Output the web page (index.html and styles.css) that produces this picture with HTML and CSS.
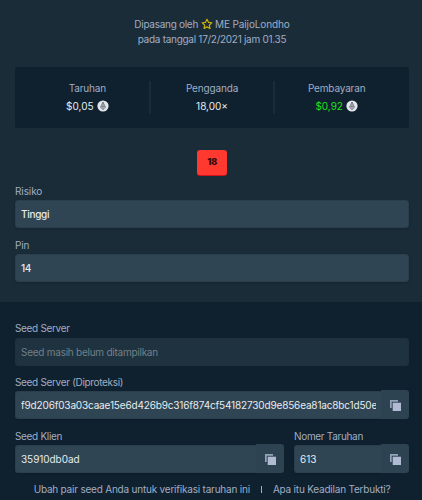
FILE: index.html
```html
<!DOCTYPE html>
<html lang="id">
<head>
<meta charset="utf-8">
<title>Taruhan</title>
<link rel="stylesheet" href="styles.css">
</head>
<body>
<svg class="defs" aria-hidden="true">
  <symbol id="coin" viewBox="0 0 12 12"><circle cx="6" cy="6" r="5.6" fill="#e3e6ea"/><path d="M6 2 3.5 7.3 6 9.6 8.5 7.3Z M6 2v7.4 M3.6 7.2 6 6.2l2.4 1" fill="#c5c9ce" stroke="#6b727b" stroke-width=".8"/></symbol>
  <symbol id="copy" viewBox="0 0 11 11"><path d="M0 0h8v1.7H1.7V8H0Z" fill="#94a3ba"/><path d="M2.7 2.7H11V11H2.7Z" fill="#b1bad3"/></symbol>
</svg>
<main class="bet">
  <header class="meta">
    <div class="line"><span>Dipasang oleh</span><svg class="star" viewBox="0 0 12 12"><path d="m6 1.2 1.45 3.1 3.35.45-2.45 2.35.6 3.4L6 8.9l-2.95 1.6.6-3.4L1.2 4.75l3.35-.45Z" fill="none" stroke="#c9b008" stroke-width="1.25" stroke-linejoin="round"/></svg><span class="name">ME PaijoLondho</span></div>
    <div class="line">pada tanggal 17/2/2021 jam 01.35</div>
  </header>
  <section class="stats">
    <div class="stat"><span class="k">Taruhan</span><span class="v">$0,05<svg class="coin"><use href="#coin"/></svg></span></div>
    <div class="stat"><span class="k">Pengganda</span><span class="v">18,00×</span></div>
    <div class="stat"><span class="k">Pembayaran</span><span class="v win">$0,92<svg class="coin"><use href="#coin"/></svg></span></div>
  </section>
  <div class="tile">18</div>
  <div class="field"><label>Risiko</label><div class="input strong">Tinggi</div></div>
  <div class="field"><label>Pin</label><div class="input strong">14</div></div>
</main>
<section class="fair">
  <div class="field"><label>Seed Server</label><div class="input disabled">Seed masih belum ditampilkan</div></div>
  <div class="field"><label>Seed Server (Diproteksi)</label><div class="group"><div class="input"><span class="hash">f9d206f03a03caae15e6d426b9c316f874cf54182730d9e856ea81ac8bc1d50e</span></div><button class="copy"><svg><use href="#copy"/></svg></button></div></div>
  <div class="row">
    <div class="field client"><label>Seed Klien</label><div class="group"><div class="input seed">35910db0ad</div><button class="copy"><svg><use href="#copy"/></svg></button></div></div>
    <div class="field nonce"><label>Nomer Taruhan</label><div class="group"><div class="input">613</div><button class="copy"><svg><use href="#copy"/></svg></button></div></div>
  </div>
  <footer><span>Ubah pair seed Anda untuk verifikasi taruhan ini</span><i></i><span>Apa itu Keadilan Terbukti?</span></footer>
</section>
</body>
</html>
```
FILE: styles.css
```css
* { box-sizing: border-box; }
body {
  margin: 0;
  width: 422px;
  height: 500px;
  overflow: hidden;
  background: #0f212e;
  color: #a1adc4;
  font: 10px/16px Inter, "Liberation Sans", sans-serif;
  white-space: nowrap;
}
.defs { position: absolute; width: 0; height: 0; }
.bet { height: 302px; padding: 16px 13px 0 15px; background: #1a2c38; }
.meta { height: 51px; letter-spacing: -.28px; }
.line { display: flex; justify-content: center; align-items: center; height: 15.5px; }
.star { width: 12px; height: 12px; margin: 0 2px 0 3px; }
.name { letter-spacing: -.12px; }
.stats { display: flex; height: 61px; padding: 14px 11px; background: #0f212e; border-radius: 2px; }
.stat {
  flex: 1 0 0;
  display: flex;
  flex-direction: column;
  align-items: center;
  gap: 2px;
}
.stat > span { margin-top: -1px; margin-bottom: 1px; }
.stat + .stat { border-left: 2px solid #1a2c38; }
.k { letter-spacing: -.15px; }
.v { display: flex; align-items: center; color: #e8ebee; }
.win { color: #1fe01f; }
.coin { width: 12px; height: 12px; margin-left: 3px; }
.tile {
  width: 30px;
  height: 25px;
  margin: 22px auto 8px 182px;
  border-radius: 3px;
  background: #ff3830;
  box-shadow: 0 1px 0 #d3141c;
  color: #330a0c;
  font-size: 9.5px;
  font-weight: 800;
  letter-spacing: -.5px;
  line-height: 23px;
  text-align: center;
}
.field { display: flex; flex-direction: column; height: 54px; }
label { height: 17px; line-height: 16px; letter-spacing: -.32px; }
.bet label { letter-spacing: -.1px; }
.input {
  width: 100%;
  height: 28px;
  padding: 0 5px;
  overflow: hidden;
  border: 1px solid #2a3e4b;
  border-radius: 3px;
  background: #2f4553;
  box-shadow: 0 1px 2px #0b18224d;
  color: #e8ebee;
  line-height: 26px;
}
.strong { font-weight: 500; letter-spacing: -.3px; }
.seed { letter-spacing: -.06px; }
.disabled {
  margin-top: 1px;
  border-color: #1d303c;
  background: #1f323f;
  box-shadow: none;
  color: #718089;
  letter-spacing: -.25px;
}
.group { display: flex; height: 28px; }
.group .input { flex: 1; min-width: 0; border-right: 0; border-radius: 3px 0 0 3px; }
.hash { display: block; overflow: hidden; letter-spacing: -.16px; }
.copy {
  display: flex;
  align-items: center;
  justify-content: center;
  width: 28px;
  height: 29px;
  margin-top: -1px;
  padding: 1px 0 0;
  border: 0;
  border-radius: 0 3px 3px 0;
  background: #2d4351;
}
.copy svg { width: 11px; height: 11px; }
.fair { height: 196px; padding: 18px 13px 0 15px; }
.row { display: flex; gap: 10px; }
.client { width: 269px; }
.nonce { flex: 1; }
footer {
  display: flex;
  align-items: center;
  justify-content: center;
  height: 16px;
  margin-top: -1px;
  letter-spacing: -.21px;
}
footer i { width: 1px; height: 7px; margin: 0 11px; background: #a1adc4; }
```
